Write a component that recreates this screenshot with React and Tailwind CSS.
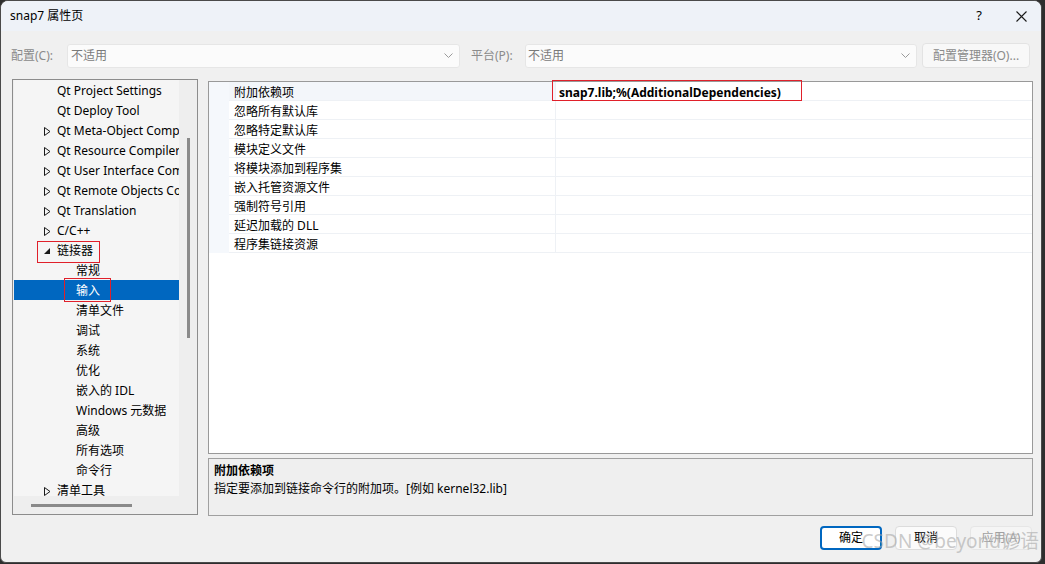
import React from "react";

const FONT = { fontFamily: '"Noto Sans", "Noto Sans CJK SC", sans-serif' };

const TREE = [
  { label: "Qt Project Settings", level: 1 },
  { label: "Qt Deploy Tool", level: 1 },
  { label: "Qt Meta-Object Compiler", level: 1, arrow: "closed" },
  { label: "Qt Resource Compiler", level: 1, arrow: "closed" },
  { label: "Qt User Interface Compiler", level: 1, arrow: "closed" },
  { label: "Qt Remote Objects Compiler", level: 1, arrow: "closed" },
  { label: "Qt Translation", level: 1, arrow: "closed" },
  { label: "C/C++", level: 1, arrow: "closed" },
  { label: "链接器", level: 1, arrow: "open", box: true },
  { label: "常规", level: 2 },
  { label: "输入", level: 2, selected: true, box: true },
  { label: "清单文件", level: 2 },
  { label: "调试", level: 2 },
  { label: "系统", level: 2 },
  { label: "优化", level: 2 },
  { label: "嵌入的 IDL", level: 2 },
  { label: "Windows 元数据", level: 2 },
  { label: "高级", level: 2 },
  { label: "所有选项", level: 2 },
  { label: "命令行", level: 2 },
  { label: "清单工具", level: 1, arrow: "closed" },
];

const PROPS = [
  "附加依赖项",
  "忽略所有默认库",
  "忽略特定默认库",
  "模块定义文件",
  "将模块添加到程序集",
  "嵌入托管资源文件",
  "强制符号引用",
  "延迟加载的 DLL",
  "程序集链接资源",
];

function Arrow({ kind }) {
  if (kind === "open") {
    return (
      <svg width="7" height="7" viewBox="0 0 7 7">
        <polygon points="6,0 6,6 0,6" fill="#1a1a1a" />
      </svg>
    );
  }
  return (
    <svg width="7" height="9" viewBox="0 0 7 9">
      <polygon points="0.5,0.5 6,4.5 0.5,8.5" fill="none" stroke="#1a1a1a" strokeWidth="1" />
    </svg>
  );
}

function Chevron() {
  return (
    <svg width="9" height="6" viewBox="0 0 9 6">
      <polyline points="0.5,0.5 4.5,4.5 8.5,0.5" fill="none" stroke="#9a9a9a" strokeWidth="1" />
    </svg>
  );
}

function TreeRow({ item }) {
  return (
    <div
      className={`relative h-[20px] pt-[2px] flex items-center whitespace-nowrap text-[12px] ${
        item.selected ? "bg-[#0067c0] text-white" : "text-black"
      }`}
    >
      <div className="w-[37px] shrink-0 flex justify-end">
        {item.level === 1 && item.arrow && <Arrow kind={item.arrow} />}
      </div>
      <span className={item.level === 2 ? "pl-[25px]" : "pl-[6px]"}>{item.label}</span>
      {item.box && item.level === 1 && (
        <div className="absolute left-[23px] top-[1px] w-[63px] h-[22px] border border-[#e0202a]" />
      )}
      {item.box && item.level === 2 && (
        <div className="absolute left-[50px] top-[-2px] w-[47px] h-[24px] border border-[#e0202a]" />
      )}
    </div>
  );
}

export default function App() {
  return (
    <div className="w-[1045px] h-[564px] bg-[#2e2e2e] overflow-hidden" style={FONT}>
      <div className="w-[1042px] h-[563px] rounded-t-lg rounded-b-md border border-[#4a4a4a] bg-[#f0f0f0] flex flex-col overflow-hidden">
        {/* Title bar */}
        <div className="h-[30px] bg-[#eef2f8] flex items-center justify-between pl-[9px] pr-[14px] shrink-0">
          <span className="text-[12px] text-black">snap7 属性页</span>
          <div className="flex items-center gap-[34px] text-[14px] text-black">
            <span className="text-[13px]">?</span>
            <svg width="11" height="11" viewBox="0 0 11 11">
              <path d="M0.5 0.5 L10.5 10.5 M10.5 0.5 L0.5 10.5" stroke="#1a1a1a" strokeWidth="1.1" />
            </svg>
          </div>
        </div>

        {/* Config row */}
        <div className="flex items-center h-[25px] mt-[12px] pl-[10px] text-[12px] text-[#8a8a8a]">
          <span className="w-[56px]">配置(C):</span>
          <div className="w-[393px] h-[24px] bg-[#fbfbfb] border border-[#e6e6e6] rounded-[3px] flex items-center justify-between pl-[3px] pr-[6px]">
            <span className="text-[#7a7a7a]">不适用</span>
            <Chevron />
          </div>
          <span className="ml-[11px] w-[54px]">平台(P):</span>
          <div className="w-[392px] h-[24px] bg-[#fbfbfb] border border-[#e6e6e6] rounded-[3px] flex items-center justify-between pl-[2px] pr-[6px]">
            <span className="text-[#7a7a7a]">不适用</span>
            <Chevron />
          </div>
          <div className="ml-[5px] w-[108px] h-[25px] bg-[#f8f8f8] border border-[#e3e3e3] rounded-[4px] flex items-center justify-center text-[#8a8a8a]">
            配置管理器(O)...
          </div>
        </div>

        {/* Main area */}
        <div className="flex mt-[11px] pl-[11px]">
          {/* Tree */}
          <div className="w-[186px] h-[436px] border border-[#8c8c8c] bg-[#eeeeee] flex flex-col shrink-0">
            <div className="flex h-[416px]">
              <div className="w-[165px] ml-[1px] bg-[#f5f5f5] overflow-hidden">
                {TREE.map((t, i) => (
                  <TreeRow key={i} item={t} />
                ))}
              </div>
              <div className="flex-1 pt-[58px] pl-[8px]">
                <div className="w-[3px] h-[200px] bg-[#8a8a8a]" />
              </div>
            </div>
            <div className="flex-1 pt-[8px] pl-[18px]">
              <div className="w-[101px] h-[3px] bg-[#8a8a8a]" />
            </div>
          </div>

          {/* Right column */}
          <div className="ml-[10px] w-[825px] pt-[2px] flex flex-col gap-[4px]">
            <div className="h-[373px] border border-[#999999] bg-white">
              {PROPS.map((p, i) => (
                <div key={i} className="flex h-[19px] text-[12px] text-black">
                  <div className="w-[20px] bg-[#f5f8fc]" />
                  <div
                    className={`w-[326px] flex items-center pl-[5px] pt-[3px] border-b border-[#eef1f5] ${
                      i === 0 ? "bg-[#f3f6fa]" : "bg-white"
                    }`}
                  >
                    {p}
                  </div>
                  <div className="flex-1 relative border-l border-b border-[#eef1f5] flex items-center pl-[3px] pt-[3px]">
                    {i === 0 && (
                      <>
                        <span className="font-bold">snap7.lib;%(AdditionalDependencies)</span>
                        <div className="absolute left-[-4px] top-[-2px] w-[250px] h-[21px] border border-[#e0202a]" />
                      </>
                    )}
                  </div>
                </div>
              ))}
            </div>
            <div className="h-[58px] border border-[#a0a0a0] bg-[#efefef] px-[5px] pt-[3px] text-[12px] text-black leading-[18px]">
              <div className="font-bold">附加依赖项</div>
              <div>指定要添加到链接命令行的附加项。[例如 kernel32.lib]</div>
            </div>
          </div>
        </div>

        {/* Footer */}
        <div className="relative flex justify-end gap-[13px] pr-[9px] mt-[10px] text-[12px]">
          <div className="w-[62px] h-[24px] rounded-[4px] border-2 border-[#0067c0] bg-white flex items-center justify-center text-black">
            确定
          </div>
          <div className="w-[62px] h-[24px] rounded-[4px] border border-[#dcdcdc] bg-[#fbfbfb] flex items-center justify-center text-black">
            取消
          </div>
          <div className="w-[62px] h-[24px] rounded-[4px] border border-[#e6e6e6] bg-[#f5f5f5] flex items-center justify-center text-[#a0a0a0]">
            应用(A)
          </div>
          <div className="absolute right-[2px] top-[6px] text-[19px] leading-none text-[#a8a8a8]/60 pointer-events-none whitespace-nowrap">
            CSDN @beyond谚语
          </div>
        </div>
      </div>
    </div>
  );
}
